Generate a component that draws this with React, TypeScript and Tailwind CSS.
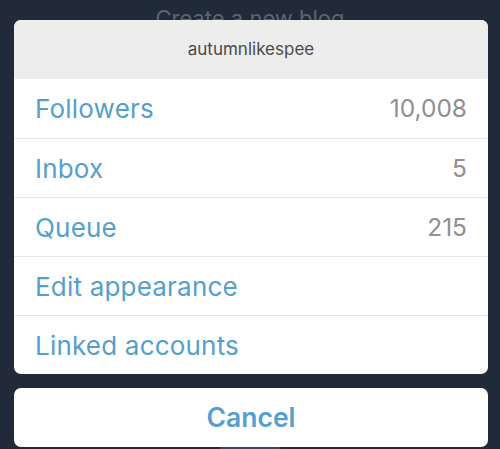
import React from "react";

const rows: { label: string; value?: string }[] = [
  { label: "Followers", value: "10,008" },
  { label: "Inbox", value: "5" },
  { label: "Queue", value: "215" },
  { label: "Edit appearance" },
  { label: "Linked accounts" },
];

const App = () => {
  return (
    <div
      className="relative h-[449px] w-[500px] overflow-hidden bg-[#212a39]"
      style={{ fontFamily: "Inter, 'Open Sans', sans-serif" }}
    >
      {/* page behind the sheet */}
      <div className="absolute left-0 right-0 top-[2px] text-center text-[22px] text-[#5c6473]">
        Create a new blog
      </div>
      <div className="absolute left-[218px] top-[444px] h-[20px] w-[64px] rounded-full bg-[#2d4a66]" />

      <div className="relative flex flex-col pl-[14px] pr-[12px] pt-[20px]">
        <div className="overflow-hidden rounded-[7px] bg-white">
          <div className="flex h-[59px] items-center justify-center bg-[#ededed] text-[17px] text-[#4a4a4a]">
            autumnlikespee
          </div>
          {rows.map((row, i) => (
            <div
              key={row.label}
              className={`flex h-[59px] items-center justify-between pl-[21px] pr-[21px] ${
                i > 0 ? "border-t border-[#e6e6e6]" : ""
              }`}
            >
              <span className="text-[26px] tracking-[0.2px] text-[#549fcd]">{row.label}</span>
              {row.value && (
                <span className="text-[24.5px] text-[#8e8e93]">{row.value}</span>
              )}
            </div>
          ))}
        </div>

        <div className="mt-[14px] flex h-[59px] items-center justify-center rounded-[7px] bg-white text-[26.5px] font-semibold text-[#549fcd]">
          Cancel
        </div>
      </div>
    </div>
  );
};

export default App;
